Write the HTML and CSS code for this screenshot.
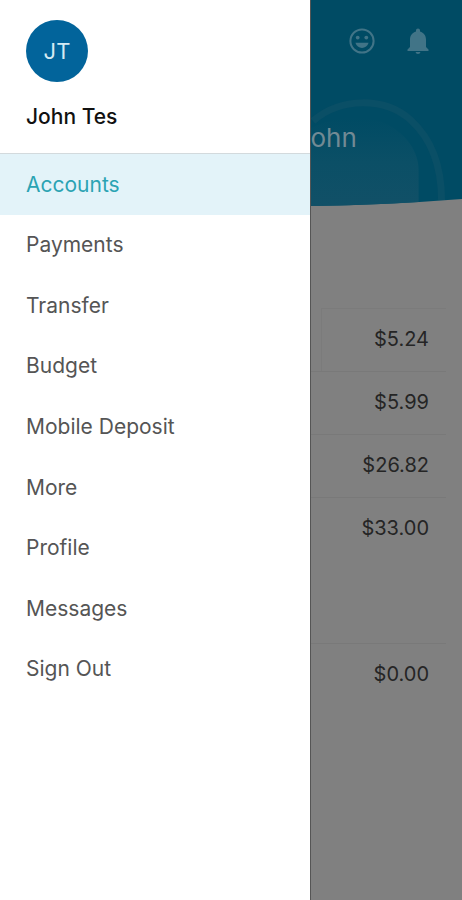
FILE: index.html
```html
<!DOCTYPE html>
<html lang="en">
<head>
<meta charset="utf-8">
<meta name="viewport" content="width=device-width, initial-scale=1">
<title>Accounts</title>
<link rel="stylesheet" href="styles.css">
</head>
<body>
<div class="app">
  <aside class="drawer">
    <header class="profile">
      <div class="avatar">JT</div>
      <div class="name">John Tes</div>
    </header>
    <nav>
      <ul class="menu">
        <li><a class="item active" href="#accounts">Accounts</a></li>
        <li><a class="item" href="#payments">Payments</a></li>
        <li><a class="item" href="#transfer">Transfer</a></li>
        <li><a class="item" href="#budget">Budget</a></li>
        <li><a class="item" href="#deposit">Mobile Deposit</a></li>
        <li><a class="item" href="#more">More</a></li>
        <li><a class="item" href="#profile">Profile</a></li>
        <li><a class="item" href="#messages">Messages</a></li>
        <li><a class="item" href="#signout">Sign Out</a></li>
      </ul>
    </nav>
  </aside>
  <main class="page">
    <header class="hero">
      <svg class="hero-art" viewBox="0 0 152 207" preserveAspectRatio="none" aria-hidden="true">
        <defs>
          <linearGradient id="glow" x1="0" y1="0" x2="0" y2="1">
            <stop offset="0" stop-color="#004b64"/>
            <stop offset="0.5" stop-color="#0b4f66"/>
            <stop offset="1" stop-color="#115067"/>
          </linearGradient>
        </defs>
        <path class="sky" d="M0 0H152V199Q76 205 0 206Z"/>
        <path class="disc" d="M0 128C24 116 54 114 76 124C96 134 108 152 108 170V202Q60 205 0 206Z"/>
        <path class="ring" d="M2 121C30 97 74 97 100 120C122 140 131 166 131 200"/>
      </svg>
      <div class="tools">
        <button class="tool" type="button" aria-label="Feedback">
          <svg viewBox="0 0 26 26" aria-hidden="true">
            <circle class="stroke" cx="13" cy="13" r="11.6"/>
            <circle cx="8.7" cy="9.6" r="1.9"/>
            <circle cx="17.3" cy="9.6" r="1.9"/>
            <path d="M6.4 14.8H19.6C18.6 18 16 19.9 13 19.9S7.4 18 6.4 14.8Z"/>
          </svg>
        </button>
        <button class="tool" type="button" aria-label="Notifications">
          <svg viewBox="0 0 26 26" aria-hidden="true">
            <path d="M13 .5C14.2 .5 15 1.4 15 2.5V3.5C18.7 4.5 21 7.8 21 11.5V19L23.5 21.5V23H2.5V21.5L5 19V11.5C5 7.8 7.3 4.5 11 3.500V2.500C11 1.4 11.8 .5 13 .5ZM10.6 24H15.4C15.2 25.3 14.3 26 13 26S10.8 25.3 10.6 24Z"/>
          </svg>
        </button>
      </div>
      <div class="greeting">ohn</div>
    </header>
    <section class="accounts">
      <ul class="amounts">
        <li class="first">$5.24</li>
        <li>$5.99</li>
        <li>$26.82</li>
        <li>$33.00</li>
      </ul>
      <ul class="amounts">
        <li>$0.00</li>
      </ul>
    </section>
  </main>
</div>
</body>
</html>
```
FILE: styles.css
```css
* { box-sizing: border-box; }

body {
  margin: 0;
  background: #808080;
  font-family: Inter, "Liberation Sans", sans-serif;
  font-weight: 400;
}

ul { margin: 0; padding: 0; list-style: none; }

.app { display: flex; min-height: 100vh; }

.drawer { width: 67%; background: #fff; }

.profile {
  padding: 20px 26px 22px;
  border-bottom: 1px solid #d3dadd;
}

.avatar {
  display: grid;
  place-items: center;
  width: 62px;
  height: 62px;
  border-radius: 50%;
  background: #02649b;
  color: #d5eaf3;
  font-size: 22px;
}

.name {
  margin-top: 21px;
  font-size: 21px;
  line-height: 28px;
  font-weight: 500;
  color: #111;
}

.menu { display: grid; grid-auto-rows: 1fr; height: 545px; }

.item {
  display: flex;
  align-items: center;
  height: 100%;
  padding: 0 26px;
  font-size: 21px;
  color: #555;
  text-decoration: none;
}

.item.active { background: #e3f3f9; color: #2ba3b3; }

.page {
  flex: 1;
  min-width: 0;
  border-left: 1px solid #555;
  overflow: hidden;
}

.hero { position: relative; height: 207px; padding-top: 28px; }

.hero-art {
  position: absolute;
  inset: 0;
  width: 100%;
  height: 100%;
}

.sky { fill: #004b64; }
.disc { fill: url(#glow); }
.ring { fill: none; stroke: #0a4f66; stroke-width: 7; }

.tools {
  position: relative;
  display: flex;
  justify-content: flex-end;
  gap: 30px;
  padding-right: 31px;
}

.tool {
  width: 26px;
  height: 26px;
  padding: 0;
  border: 0;
  background: none;
}

.tool svg { display: block; width: 100%; height: 100%; fill: #417487; }
.tool .stroke { fill: none; stroke: #417487; stroke-width: 2; }

.greeting {
  position: relative;
  margin-top: 68px;
  font-size: 26px;
  line-height: 32px;
  color: #728a94;
}

.accounts {
  display: grid;
  gap: 83px;
  padding: 101px 16px 0 0;
}

.amounts li {
  display: flex;
  align-items: center;
  justify-content: flex-end;
  height: 63px;
  padding: 0 17px 2px 0;
  border-top: 1px solid #797979;
  font-size: 20px;
  color: #252525;
}

.amounts .first { margin-left: 10px; border-left: 1px solid #7b7b7b; border-top-color: #7b7b7b; }
```
